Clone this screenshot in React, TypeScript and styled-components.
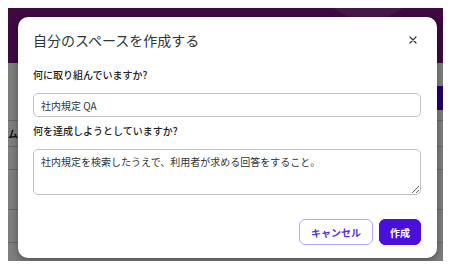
import styled, { createGlobalStyle } from "styled-components";

const GlobalStyle = createGlobalStyle`
    body {
        margin: 8px;
        font-family: "Noto Sans CJK JP", "Noto Sans", sans-serif;
        background: #ffffff;
    }
`;

const Screen = styled.div`
    position: relative;
    height: 253px;
    background: #ffffff;
    overflow: hidden;
`;

const AppBar = styled.header`
    position: relative;
    height: 55px;
    background: #7c1582;
    overflow: hidden;
`;

const Glow = styled.div`
    position: absolute;
    width: 110px;
    height: 110px;
    border-radius: 50%;
    right: 20px;
    top: -98px;
    background: rgba(255, 255, 255, 0.12);
`;

const Toolbar = styled.div`
    display: flex;
    justify-content: flex-end;
    padding: 23px 0 0;
    height: 57px;
    box-sizing: border-box;
`;

const PrimaryAction = styled.div`
    width: 90px;
    height: 24px;
    border-radius: 4px 0 0 4px;
    background: #4a00d8;
`;

const Table = styled.div`
    display: flex;
    flex-direction: column;
`;

const Row = styled.div<{ $height: number }>`
    height: ${(p) => p.$height}px;
    border-bottom: 1px solid #cccccc;
    box-sizing: border-box;
    display: flex;
    align-items: center;
    font-size: 10px;
    color: #222;
`;

const HeaderRow = styled(Row)`
    border-top: 1px solid #cccccc;
    font-weight: 600;
`;

const Backdrop = styled.div`
    position: absolute;
    inset: 0;
    background: rgba(0, 0, 0, 0.5);
    display: flex;
    padding: 9px 6px 3px 10px;
`;

const Dialog = styled.div`
    flex: 1;
    background: #ffffff;
    border-radius: 10px;
    box-shadow: 0 3px 10px rgba(0, 0, 0, 0.35);
    display: flex;
    flex-direction: column;
`;

const DialogHeader = styled.div`
    display: flex;
    align-items: center;
    justify-content: space-between;
    padding: 10px 16px 0 15px;
    height: 26px;
`;

const Title = styled.h2`
    margin: 0;
    font-size: 14px;
    line-height: 26px;
    font-weight: 400;
    color: #333333;
`;

const CloseButton = styled.button`
    width: 16px;
    height: 16px;
    padding: 0;
    border: 0;
    background: none;
    display: flex;
    align-items: center;
    justify-content: center;
    cursor: pointer;
`;

const DialogBody = styled.div`
    display: flex;
    flex-direction: column;
    padding: 15px 16px 13px 15px;
`;

const Label = styled.label<{ $gap?: number }>`
    font-size: 10px;
    line-height: 14px;
    font-weight: 500;
    color: #222222;
    margin-top: ${(p) => p.$gap ?? 0}px;
`;

const fieldStyles = `
    box-sizing: border-box;
    width: 100%;
    margin-top: 11px;
    border: 1px solid #c2c2c2;
    border-radius: 5px;
    font-family: "Noto Sans CJK JP", sans-serif;
    font-size: 10px;
    color: #333333;
    background: #ffffff;
    outline: none;
`;

const TextInput = styled.input`
    ${fieldStyles}
    height: 24px;
    padding: 0 7px;
`;

const TextArea = styled.textarea`
    ${fieldStyles}
    height: 46px;
    padding: 5px 7px;
    line-height: 14px;
    resize: vertical;
    display: block;
`;

const Footer = styled.div`
    display: flex;
    justify-content: flex-end;
    gap: 6px;
    margin-top: 24px;
`;

const Button = styled.button<{ $primary?: boolean }>`
    height: 26px;
    padding: 0 ${(p) => (p.$primary ? 10 : 11)}px;
    border-radius: 6px;
    font-family: "Noto Sans CJK JP", sans-serif;
    font-size: 10px;
    font-weight: 600;
    border: 1px solid ${(p) => (p.$primary ? "#4a0fdb" : "#b9a6f6")};
    background: ${(p) => (p.$primary ? "#4a0fdb" : "#ffffff")};
    color: ${(p) => (p.$primary ? "#ffffff" : "#5a30d6")};
    cursor: pointer;
`;

export default function App() {
    return (
        <>
            <GlobalStyle />
            <Screen>
                <AppBar>
                    <Glow />
                </AppBar>
                <Toolbar>
                    <PrimaryAction />
                </Toolbar>
                <Table>
                    <HeaderRow $height={27}>ムカ</HeaderRow>
                    <Row $height={23} />
                    <Row $height={40} />
                    <Row $height={33} />
                </Table>
                <Backdrop>
                    <Dialog>
                        <DialogHeader>
                            <Title>自分のスペースを作成する</Title>
                            <CloseButton aria-label="閉じる">
                                <svg width="8" height="8" viewBox="0 0 8 8">
                                    <path d="M1 1L7 7M7 1L1 7" stroke="#333" strokeWidth="1.2" strokeLinecap="round" />
                                </svg>
                            </CloseButton>
                        </DialogHeader>
                        <DialogBody>
                            <Label>何に取り組んでいますか?</Label>
                            <TextInput readOnly value="社内規定 QA" />
                            <Label $gap={7}>何を達成しようとしていますか?</Label>
                            <TextArea readOnly value="社内規定を検索したうえで、利用者が求める回答をすること。" />
                            <Footer>
                                <Button>キャンセル</Button>
                                <Button $primary>作成</Button>
                            </Footer>
                        </DialogBody>
                    </Dialog>
                </Backdrop>
            </Screen>
        </>
    );
}
